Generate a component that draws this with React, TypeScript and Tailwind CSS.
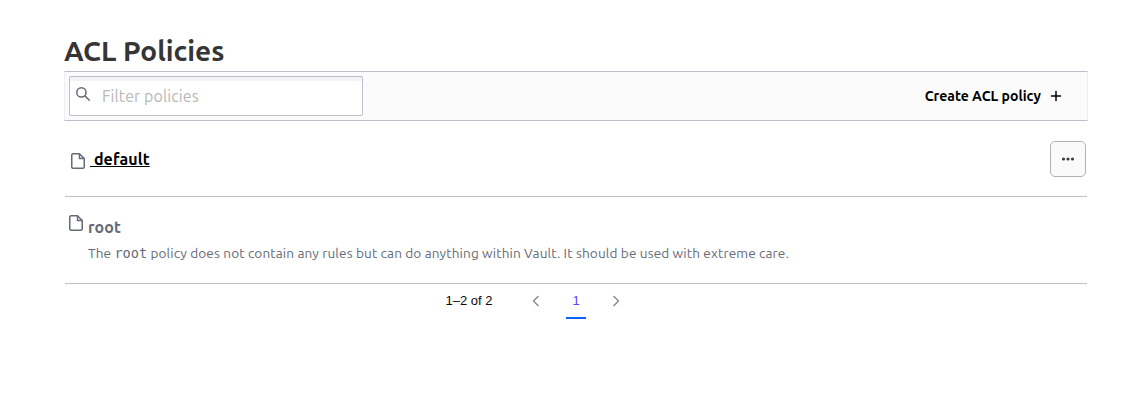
function FileIcon() {
  return (
    <svg className="block h-4 w-4" viewBox="0 0 16 16" fill="none" stroke="#656a76" strokeWidth="1.5" strokeLinejoin="round">
      <path d="M9.5 .75H3A1.25 1.25 0 0 0 1.75 2v12c0 .69.56 1.25 1.25 1.25h10c.69 0 1.25-.56 1.25-1.25V5.5L9.5 .75z" />
      <path d="M9.5 .75V5.5h4.75" />
    </svg>
  );
}

function Chevron({ d }: { d: string }) {
  return (
    <svg className="block h-4 w-4" viewBox="0 0 16 16" fill="none" stroke="#8c909c" strokeWidth="1.6" strokeLinecap="round" strokeLinejoin="round">
      <path d={d} />
    </svg>
  );
}

export default function App() {
  return (
    <main className="h-[401px] bg-white pl-16 pr-[59px] pt-[35px] font-['Ubuntu','Noto_Sans',sans-serif] text-black">
      <h1 className="h-9 whitespace-nowrap text-[28px] font-bold leading-8 text-[#353535]">ACL Policies</h1>

      <div className="flex h-[50px] items-center justify-between border border-x-[#ebeef2] border-y-[#bac1cc] bg-[#fbfbfc] pl-1 pr-[23px]">
        <label className="flex h-10 w-[294px] items-center rounded-[2px] border border-[#bac1cc] bg-white pl-[5px] shadow-[inset_0_4px_1px_#f3f3f5]">
          <svg className="-mt-1 h-4 w-4 shrink-0" viewBox="0 0 16 16" fill="none" stroke="#656a76" strokeWidth="1.5" strokeLinecap="round">
            <circle cx="6.4" cy="6.4" r="4.6" />
            <path d="M10 10l4.3 4.3" />
          </svg>
          <input className="ml-[11px] min-w-0 flex-1 bg-transparent text-base tracking-[0.1px] outline-none placeholder:text-[#b8b8b8]" placeholder="Filter policies" />
        </label>
        <button className="flex items-center text-sm font-bold">
          Create ACL policy
          <svg className="ml-[7px] h-4 w-4" viewBox="0 0 16 16" fill="none" stroke="#000" strokeWidth="1.5" strokeLinecap="round">
            <path d="M8 3.5v9M3.5 8h9" />
          </svg>
        </button>
      </div>

      <div className="mx-px flex h-[76px] items-center justify-between border-b border-[#bac1cc] pl-[5px] pr-px">
        <a href="#default" className="flex items-center text-base font-bold leading-6">
          <span className="mt-[5px]"><FileIcon /></span>
          <span className="ml-1 whitespace-pre tracking-[0.1px] underline">{' default'}</span>
        </a>
        <button className="flex h-9 w-9 items-center justify-center rounded-[5px] border border-[#b1b3b8] bg-[#fafafa]" aria-label="More options">
          <svg className="h-4 w-4" viewBox="0 0 16 16" fill="#3b3d45">
            <circle cx="3.5" cy="8" r="1.6" />
            <circle cx="8" cy="8" r="1.6" />
            <circle cx="12.5" cy="8" r="1.6" />
          </svg>
        </button>
      </div>

      <div className="mx-px flex h-[87px] border-b border-[#bac1cc] pl-[3px] pt-[18px] text-[#656a76]">
        <FileIcon />
        <div className="ml-1">
          <div className="text-base font-bold leading-6 tracking-[0.1px]">root</div>
          <p className="mt-1 whitespace-nowrap text-[13.6px] leading-5 tracking-[0.125px]">
            The <code className="font-['DejaVu_Sans_Mono',monospace] text-[13.6px] leading-none tracking-normal">root</code> policy does not contain any rules but can do anything within Vault. It should be used with extreme care.
          </p>
        </div>
      </div>

      <nav className="flex h-[35px] pl-[381.5px] font-['Liberation_Sans',sans-serif] text-[13px] leading-[34px] text-[#0c0c0e]">
        <span className="w-[47px] whitespace-nowrap">1–2 of 2</span>
        <span className="ml-[35.5px] mt-[9px]"><Chevron d="M10 3.5L5.5 8l4.5 4.5" /></span>
        <span className="ml-[22px] w-5 border-b-2 border-[#1060ff] text-center text-[#5b45ff]">1</span>
        <span className="ml-[22px] mt-[9px]"><Chevron d="M6 3.5L10.5 8 6 12.5" /></span>
      </nav>
    </main>
  );
}
